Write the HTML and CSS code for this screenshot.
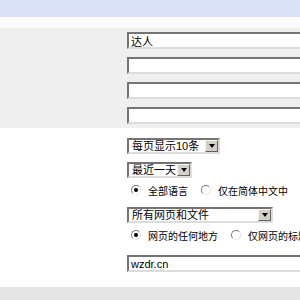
FILE: index.html
```html
<!DOCTYPE html>
<html>
<head>
    <meta charset="UTF-8" />
    <title>高级搜索</title>
    <link rel="stylesheet" href="styles.css">
</head>
<body>
    <div class="topbar"></div>
    <div class="spacer"></div>

    <div class="section words">
        <div class="field"><input type="text" class="text-input" value="达人"></div>
        <div class="field"><input type="text" class="text-input"></div>
        <div class="field"><input type="text" class="text-input"></div>
        <div class="field"><input type="text" class="text-input"></div>
    </div>

    <div class="section options">
        <div class="field select-row first">
            <div class="select sel-count">
                <span class="select-value">每页显示10条</span>
                <span class="select-btn"><span class="arrow"></span></span>
            </div>
        </div>
        <div class="field select-row">
            <div class="select sel-time">
                <span class="select-value">最近一天</span>
                <span class="select-btn"><span class="arrow"></span></span>
            </div>
        </div>
        <div class="field radio-row">
            <label class="radio-item"><span class="radio checked"></span>全部语言</label>
            <label class="radio-item"><span class="radio"></span>仅在简体中文中</label>
            <label class="radio-item"><span class="radio"></span>仅在繁体中文中</label>
        </div>
        <div class="field select-row">
            <div class="select sel-type">
                <span class="select-value">所有网页和文件</span>
                <span class="select-btn"><span class="arrow"></span></span>
            </div>
        </div>
        <div class="field radio-row">
            <label class="radio-item"><span class="radio checked"></span>网页的任何地方</label>
            <label class="radio-item"><span class="radio"></span>仅网页的标题中</label>
        </div>
        <div class="field select-row last">
            <input type="text" class="text-input" value="wzdr.cn">
        </div>
    </div>

    <div class="footer-bar"></div>
</body>
</html>
```

FILE: styles.css
```css
html, body {
    margin: 0;
    padding: 0;
    overflow: hidden;
    background: #ffffff;
    font-family: "Liberation Sans", "Noto Sans CJK SC", sans-serif;
    font-size: 11px;
    color: #000;
}

.topbar {
    height: 17px;
    background: #d9e2f5;
}

.spacer {
    height: 11px;
    background: #fbfbfb;
}

.section {
    display: flex;
    flex-direction: column;
    padding-left: 127px;
}

.words {
    background: #efefef;
    height: 100px;
}

.words .field {
    height: 25px;
    padding-top: 4px;
    box-sizing: border-box;
}

.text-input {
    display: block;
    width: 200px;
    height: 17px;
    box-sizing: border-box;
    margin: 0;
    padding: 0 2px;
    border: 2px solid;
    border-color: #747474 #dcdcdc #dcdcdc #747474;
    background: #fff;
    font-family: "Liberation Sans", "Noto Sans CJK SC", sans-serif;
    font-size: 11px;
    line-height: 13px;
    color: #000;
    outline: none;
}

.options {
    background: #fff;
    height: 159px;
    box-sizing: border-box;
    padding-top: 10px;
}

.select-row {
    margin-top: 8px;
}

.select-row.first {
    margin-top: 0;
}

.select-row.last {
    margin-top: 11px;
}

.select {
    display: flex;
    height: 16px;
    box-sizing: border-box;
    border: 2px solid;
    border-color: #747474 #dcdcdc #dcdcdc #747474;
    background: #fff;
}

.sel-count { width: 93px; }
.sel-time { width: 65px; }
.sel-type { width: 146px; }

.select-value {
    flex: 1;
    padding-left: 3px;
    line-height: 12px;
    white-space: nowrap;
    overflow: hidden;
}

.select-btn {
    width: 13px;
    box-sizing: border-box;
    background: #d4d0c8;
    border: 1px solid;
    border-color: #f4f4f4 #606060 #606060 #f4f4f4;
    display: flex;
    align-items: center;
    justify-content: center;
}

.arrow {
    width: 0;
    height: 0;
    border-left: 3px solid transparent;
    border-right: 3px solid transparent;
    border-top: 4px solid #000;
}

.radio-row {
    display: flex;
    align-items: center;
    height: 14px;
    margin-top: 5px;
    margin-bottom: 2px;
    font-size: 10px;
    white-space: nowrap;
}

.radio-item {
    display: flex;
    align-items: center;
    margin-right: 9px;
}

.radio {
    width: 10px;
    height: 10px;
    box-sizing: border-box;
    margin-left: 4px;
    margin-right: 7px;
    border-radius: 50%;
    border: 1px solid;
    border-color: #7a7a7a #e6e6e6 #e6e6e6 #7a7a7a;
    background: #fff;
    display: flex;
    align-items: center;
    justify-content: center;
}

.radio.checked::after {
    content: "";
    width: 4px;
    height: 4px;
    border-radius: 50%;
    background: #000;
}

.footer-bar {
    height: 13px;
    background: #e5e5e5;
}
```
